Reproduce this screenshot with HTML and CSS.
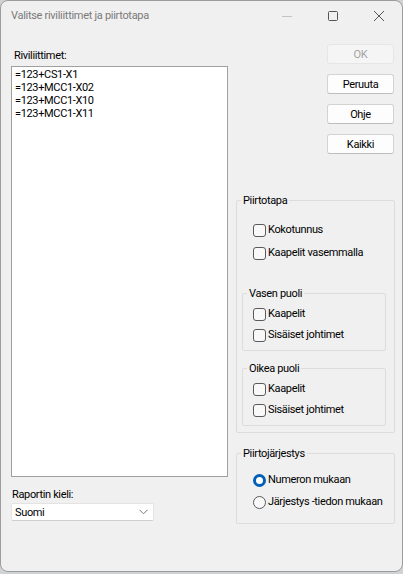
FILE: index.html
```html
<!DOCTYPE html>
<html>
<head>
<meta charset="utf-8">
<link rel="stylesheet" href="styles.css">
</head>
<body>
<div class="window">
  <div class="titlebar">
    <div class="title">Valitse riviliittimet ja piirtotapa</div>
    <div class="controls">
      <div class="ctl"><svg width="12" height="12" viewBox="0 0 12 12"><path d="M1 6.5H11" stroke="#c4c4c4" stroke-width="1"/></svg></div>
      <div class="ctl"><svg width="12" height="12" viewBox="0 0 12 12"><rect x="1.5" y="1.5" width="9" height="9" rx="1" fill="none" stroke="#555" stroke-width="1"/></svg></div>
      <div class="ctl"><svg width="12" height="12" viewBox="0 0 12 12"><path d="M1 1L11 11M11 1L1 11" stroke="#555" stroke-width="1"/></svg></div>
    </div>
  </div>
  <div class="content">
    <div class="left">
      <div class="lbl lbl-list">Riviliittimet:</div>
      <div class="listbox">
        <div class="item">=123+CS1-X1</div>
        <div class="item">=123+MCC1-X02</div>
        <div class="item">=123+MCC1-X10</div>
        <div class="item">=123+MCC1-X11</div>
      </div>
      <div class="lbl lbl-lang">Raportin kieli:</div>
      <div class="combo">
        <span>Suomi</span>
        <svg width="9" height="6" viewBox="0 0 9 6"><path d="M0.5 0.8L4.5 4.8L8.5 0.8" fill="none" stroke="#777" stroke-width="1"/></svg>
      </div>
    </div>
    <div class="right">
      <div class="buttons">
        <div class="btn disabled">OK</div>
        <div class="btn">Peruuta</div>
        <div class="btn">Ohje</div>
        <div class="btn">Kaikki</div>
      </div>
      <fieldset class="group g-main">
        <legend>Piirtotapa</legend>
        <div class="opts opts-main">
          <div class="opt"><span class="cb"></span>Kokotunnus</div>
          <div class="opt"><span class="cb"></span>Kaapelit vasemmalla</div>
        </div>
        <fieldset class="group sub sub-left">
          <legend>Vasen puoli</legend>
          <div class="opts opts-sub">
            <div class="opt"><span class="cb"></span>Kaapelit</div>
            <div class="opt"><span class="cb"></span>Sisäiset johtimet</div>
          </div>
        </fieldset>
        <fieldset class="group sub sub-right">
          <legend>Oikea puoli</legend>
          <div class="opts opts-sub">
            <div class="opt"><span class="cb"></span>Kaapelit</div>
            <div class="opt"><span class="cb"></span>Sisäiset johtimet</div>
          </div>
        </fieldset>
      </fieldset>
      <fieldset class="group g-order">
        <legend>Piirtojärjestys</legend>
        <div class="opts opts-order">
          <div class="opt"><span class="rb checked"></span>Numeron mukaan</div>
          <div class="opt"><span class="rb"></span>Järjestys -tiedon mukaan</div>
        </div>
      </fieldset>
    </div>
  </div>
</div>
</body>
</html>
```

FILE: styles.css
```css
* { box-sizing: border-box; }
html, body { margin: 0; padding: 0; }
body {
  width: 403px;
  height: 574px;
  background: #cfd3d6;
  font-family: Roboto, "Noto Sans", sans-serif;
  font-size: 11px;
  letter-spacing: -0.35px;
  color: #000;
  overflow: hidden;
}
.window {
  width: 403px;
  height: 572px;
  background: #f0f0f0;
  border: 1px solid #9c9c9c;
  border-radius: 8px;
  overflow: hidden;
  display: flex;
  flex-direction: column;
}
.titlebar {
  height: 29px;
  display: flex;
  align-items: center;
  justify-content: space-between;
  flex-shrink: 0;
}
.title {
  padding-left: 10px;
  font-size: 11px;
  letter-spacing: -0.3px;
  color: #7a7a7a;
  line-height: 16px;
  margin-top: 1px;
}
.controls { display: flex; height: 100%; }
.ctl {
  width: 46px;
  height: 100%;
  display: flex;
  align-items: center;
  justify-content: center;
}
.content {
  display: flex;
  padding-left: 10px;
}
.left {
  width: 217px;
  display: flex;
  flex-direction: column;
}
.lbl { line-height: 15px; }
.lbl-list { margin-top: 18px; padding-left: 3px; }
.listbox {
  margin-top: 3px;
  height: 411px;
  background: #fff;
  border: 1px solid #a0a0a0;
  padding: 1px 3px;
}
.item { line-height: 13px; height: 13px; }
.lbl-lang { margin-top: 10px; padding-left: 1px; }
.combo {
  margin-top: 1px;
  width: 143px;
  height: 18px;
  background: #fff;
  border: 1px solid #e3e3e3;
  border-bottom-color: #cfcfcf;
  border-radius: 2px;
  display: flex;
  align-items: center;
  justify-content: space-between;
  padding: 0 5px 0 3px;
}
.right {
  margin-left: 8px;
  width: 159px;
  display: flex;
  flex-direction: column;
}
.buttons {
  display: flex;
  flex-direction: column;
  align-items: flex-end;
  gap: 10px;
  margin-top: 14px;
  padding-right: 1px;
}
.btn {
  width: 67px;
  height: 20px;
  background: #fdfdfd;
  border: 1px solid #d3d3d3;
  border-bottom-color: #bdbdbd;
  border-radius: 3px;
  display: flex;
  align-items: center;
  justify-content: center;
}
.btn.disabled {
  background: #f5f5f5;
  border-color: #e6e6e6;
  color: #a3a3a3;
}
.group {
  margin: 0;
  min-width: 0;
  border: 1px solid #dcdcdc;
  border-radius: 2px;
  padding: 0 0 0 4px;
}
legend {
  padding: 0 2px;
  line-height: 15px;
}
.g-main { margin-top: 39px; height: 240px; padding-right: 8px; }
.opt {
  display: flex;
  align-items: center;
  height: 16px;
  line-height: 16px;
  white-space: nowrap;
}
.opts { display: flex; flex-direction: column; }
.opts-main { margin-top: 14px; gap: 7px; padding-left: 12px; }
.cb {
  width: 13px;
  height: 13px;
  border: 1px solid #5a5a5a;
  border-radius: 3px;
  background: #f8f8f8;
  margin-right: 2px;
  flex-shrink: 0;
}
.sub { margin-left: 1px; padding-bottom: 7px; }
.sub-left { margin-top: 25px; }
.sub-right { margin-top: 10px; }
.opts-sub { margin-top: 5px; gap: 5px; padding-left: 6px; }
.g-order { margin-top: 13px; height: 78px; }
.opts-order { margin-top: 11px; gap: 6px; padding-left: 12px; }
.rb {
  width: 13px;
  height: 13px;
  border: 1px solid #5a5a5a;
  border-radius: 50%;
  background: #f8f8f8;
  margin-right: 2px;
  flex-shrink: 0;
}
.rb.checked {
  border: 3.5px solid #005fb8;
  background: #fff;
}
```
